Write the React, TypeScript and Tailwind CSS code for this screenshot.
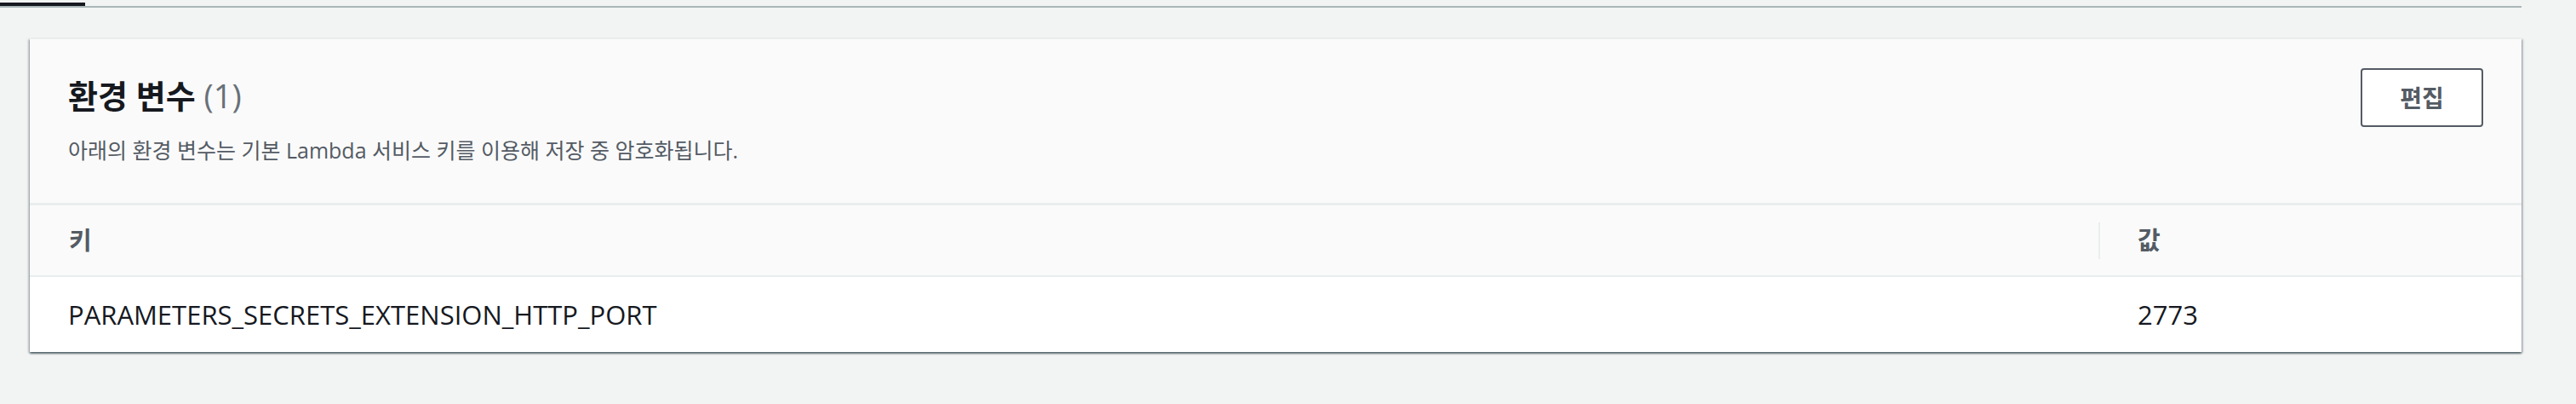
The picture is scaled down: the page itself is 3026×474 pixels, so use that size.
import React from 'react';

const rows = [{ key: 'PARAMETERS_SECRETS_EXTENSION_HTTP_PORT', value: '2773' }];

const App: React.FC = () => {
  return (
    <div
      className="min-h-[474px] w-[3026px] bg-[#f2f3f3]"
      style={{ fontFamily: '"Open Sans", "Noto Sans CJK KR", sans-serif' }}
    >
      {/* Tabs underline */}
      <div className="w-[2962px] pt-[3px]">
        <div className="h-[4px] w-[100px] bg-[#16191f]" />
        <div className="h-[2px] bg-[#aab7b8]" />
      </div>

      <div className="pl-[35px] pt-[36px]">
        <div className="w-[2927px] bg-white border-t border-[#eaeded] shadow-[0_2px_2px_0_rgba(0,28,36,0.55),2px_1px_2px_0_rgba(0,28,36,0.18),-2px_1px_2px_0_rgba(0,28,36,0.18)]">
          {/* Header */}
          <div className="flex items-start justify-between bg-[#fafafa] pl-[45px] pr-[45px] pt-[34px] pb-[42px] border-b-[3px] border-[#eaeded]">
            <div className="mt-[4px]">
              <h2 className="text-[38px] leading-[56px] font-bold text-[#16191f]">
                환경 변수 <span className="font-normal text-[#687078]">(1)</span>
              </h2>
              <p className="mt-[16px] text-[25px] leading-[40px] text-[#545b64]">
                아래의 환경 변수는 기본 Lambda 서비스 키를 이용해 저장 중 암호화됩니다.
              </p>
            </div>
            <button className="h-[69px] w-[144px] rounded-[4px] border-2 border-[#545b64] bg-white text-[28px] font-bold text-[#545b64]">
              편집
            </button>
          </div>

          {/* Table */}
          <div className="grid grid-cols-[2430px_1fr] bg-[#fafafa] border-b-2 border-[#eaeded] h-[84px] items-center">
            <div className="pl-[46px] text-[29px] font-bold text-[#545b64]">키</div>
            <div className="flex h-[43px] items-center">
              <div className="h-[43px] w-[2px] bg-[#eaeded]" />
              <div className="pl-[44px] text-[29px] font-bold text-[#545b64]">값</div>
            </div>
          </div>
          {rows.map((r) => (
            <div key={r.key} className="grid grid-cols-[2430px_1fr] h-[88px] items-center bg-white">
              <div className="pl-[45px] text-[31px] text-[#16191f]">{r.key}</div>
              <div className="pl-[46px] text-[31px] text-[#16191f]">{r.value}</div>
            </div>
          ))}
        </div>
      </div>
    </div>
  );
};

export default App;
